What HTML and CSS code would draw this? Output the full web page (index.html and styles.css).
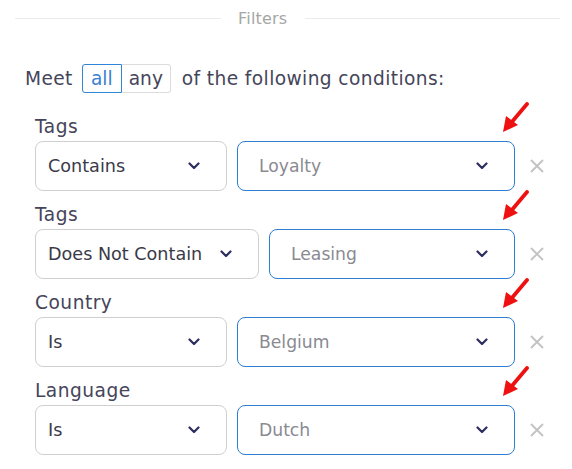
FILE: index.html
```html
<!DOCTYPE html>
<html>
<head>
<meta charset="utf-8">
<link rel="stylesheet" href="styles.css">
</head>
<body>
<div class="page">
  <div class="legend">
    <span class="line line-left"></span>
    <span class="legend-text">Filters</span>
    <span class="line line-right"></span>
  </div>

  <div class="meet">
    <span>Meet</span>
    <div class="seg">
      <span class="seg-btn active">all</span>
      <span class="seg-btn">any</span>
    </div>
    <span>of the following conditions:</span>
  </div>

  <div class="conds">
    <div class="cond">
      <div class="label">Tags</div>
      <div class="row">
        <div class="select op w1"><span>Contains</span><svg class="chev" viewBox="0 0 12 8"><path d="M1.5 1.5 6 6 10.5 1.5"/></svg></div>
        <div class="select val v1"><span>Loyalty</span><svg class="chev" viewBox="0 0 12 8"><path d="M1.5 1.5 6 6 10.5 1.5"/></svg>
          <svg class="arrow" viewBox="0 0 30 32"><path d="M26 2 L10 21"/><polygon points="2,30 5,14 17,23"/></svg>
        </div>
        <svg class="x" viewBox="0 0 16 16"><path d="M2 2 14 14M14 2 2 14"/></svg>
      </div>
    </div>
    <div class="cond">
      <div class="label">Tags</div>
      <div class="row">
        <div class="select op w2"><span>Does Not Contain</span><svg class="chev" viewBox="0 0 12 8"><path d="M1.5 1.5 6 6 10.5 1.5"/></svg></div>
        <div class="select val v2"><span>Leasing</span><svg class="chev" viewBox="0 0 12 8"><path d="M1.5 1.5 6 6 10.5 1.5"/></svg>
          <svg class="arrow" viewBox="0 0 30 32"><path d="M26 2 L10 21"/><polygon points="2,30 5,14 17,23"/></svg>
        </div>
        <svg class="x" viewBox="0 0 16 16"><path d="M2 2 14 14M14 2 2 14"/></svg>
      </div>
    </div>
    <div class="cond">
      <div class="label">Country</div>
      <div class="row">
        <div class="select op w1"><span>Is</span><svg class="chev" viewBox="0 0 12 8"><path d="M1.5 1.5 6 6 10.5 1.5"/></svg></div>
        <div class="select val v1"><span>Belgium</span><svg class="chev" viewBox="0 0 12 8"><path d="M1.5 1.5 6 6 10.5 1.5"/></svg>
          <svg class="arrow" viewBox="0 0 30 32"><path d="M26 2 L10 21"/><polygon points="2,30 5,14 17,23"/></svg>
        </div>
        <svg class="x" viewBox="0 0 16 16"><path d="M2 2 14 14M14 2 2 14"/></svg>
      </div>
    </div>
    <div class="cond">
      <div class="label">Language</div>
      <div class="row">
        <div class="select op w1"><span>Is</span><svg class="chev" viewBox="0 0 12 8"><path d="M1.5 1.5 6 6 10.5 1.5"/></svg></div>
        <div class="select val v1"><span>Dutch</span><svg class="chev" viewBox="0 0 12 8"><path d="M1.5 1.5 6 6 10.5 1.5"/></svg>
          <svg class="arrow" viewBox="0 0 30 32"><path d="M26 2 L10 21"/><polygon points="2,30 5,14 17,23"/></svg>
        </div>
        <svg class="x" viewBox="0 0 16 16"><path d="M2 2 14 14M14 2 2 14"/></svg>
      </div>
    </div>
  </div>
</div>
</body>
</html>
```

FILE: styles.css
```css
html, body {
  margin: 0;
  padding: 0;
  background: #ffffff;
}
body {
  font-family: "DejaVu Sans", "Open Sans", sans-serif;
  color: #45455a;
}
.page {
  width: 572px;
  height: 469px;
  overflow: hidden;
}
.legend {
  display: flex;
  align-items: center;
  height: 36px;
  padding: 0 12px 0 15px;
}
.line {
  height: 1px;
  background: #ececec;
}
.line-left {
  width: 206px;
}
.line-right {
  flex: 1;
}
.legend-text {
  font-size: 16px;
  color: #a6a6a6;
  padding: 0 18px 0 17px;
  letter-spacing: 0.2px;
}
.meet {
  display: flex;
  align-items: center;
  margin-top: 27px;
  padding-left: 25px;
  font-size: 18.6px;
  letter-spacing: 0.4px;
  color: #45455a;
  height: 30px;
}
.seg {
  display: flex;
  margin: 0 11px 0 9px;
  letter-spacing: 0;
}
.seg-btn {
  display: flex;
  align-items: center;
  justify-content: center;
  height: 27px;
  border: 1px solid #dcdcdc;
  color: #45455a;
}
.seg-btn:first-child {
  width: 38px;
  border-radius: 3px 0 0 3px;
}
.seg-btn:last-child {
  width: 48px;
  border-left: none;
  border-radius: 0 3px 3px 0;
}
.seg-btn.active {
  border-color: #2f86d6;
  color: #3b7fd0;
}
.conds {
  padding-left: 35px;
  margin-top: 23px;
}
.cond {
  margin-bottom: 13px;
}
.label {
  font-size: 18.6px;
  letter-spacing: 0.5px;
  line-height: 22px;
  height: 22px;
  margin-bottom: 3px;
  color: #45455a;
}
.row {
  display: flex;
  align-items: center;
}
.select {
  position: relative;
  display: flex;
  align-items: center;
  justify-content: space-between;
  height: 48px;
  border: 1px solid #cfcfcf;
  border-radius: 8px;
  font-size: 17.6px;
  box-sizing: content-box;
}
.select.op {
  padding: 0 26px 0 12px;
  color: #3a3a48;
}
.w1 { width: 152px; }
.w2 { width: 184px; }
.select.val {
  flex: none;
  margin-left: 10px;
  border-color: #2f7fd0;
  padding: 0 26px 0 21px;
  color: #8a8a92;
  font-size: 17.2px;
}
.v1 { width: 229px; }
.v2 { width: 197px; }
.chev {
  flex: none;
  width: 12px;
  height: 8px;
  fill: none;
  stroke: #2e2e5c;
  stroke-width: 2.2;
  stroke-linecap: round;
  stroke-linejoin: round;
}
.x {
  width: 16px;
  height: 16px;
  margin-left: 14px;
  stroke: #c2c2c2;
  stroke-width: 1.8;
}
.arrow {
  position: absolute;
  right: -17px;
  top: -40px;
  width: 30px;
  height: 32px;
}
.arrow path {
  stroke: #ee1111;
  stroke-width: 3.8;
  stroke-linecap: round;
}
.arrow polygon {
  fill: #ee1111;
}
```
